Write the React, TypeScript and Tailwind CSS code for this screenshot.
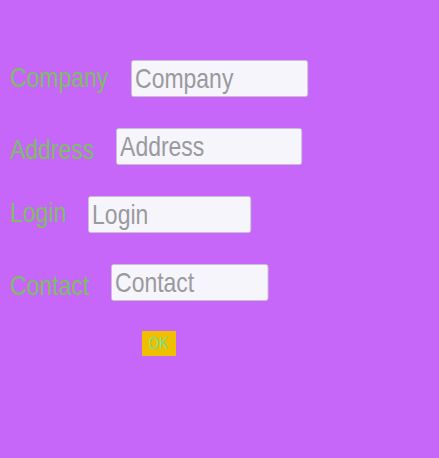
import React from 'react';

// Arial Narrow look: Liberation Sans squeezed horizontally
const fields = [
  { label: 'Company', labelW: 'w-[99px]', outer: 'w-[177px]', inner: 'w-[216px]', offset: 'mt-[2px]' },
  { label: 'Address', labelW: 'w-[84px]', outer: 'w-[186px]', inner: 'w-[227px]', offset: 'mt-[6px]' },
  { label: 'Login', labelW: 'w-[56px]', outer: 'w-[163px]', inner: 'w-[199px]', offset: 'mt-[1px]' },
  { label: 'Contact', labelW: 'w-[79px]', outer: 'w-[157px]', inner: 'w-[192px]', offset: 'mt-[6px]' },
];

export default function App() {
  return (
    <div className="min-h-[458px] w-full bg-[#c767fa] pt-[60px] pl-[10px] font-['Liberation_Sans',Arial,sans-serif]">
      <div className="flex flex-col gap-[31px]">
        {fields.map((f) => (
          <div key={f.label} className="flex h-[37px] items-start gap-[22px]">
            <label className={`${f.labelW} ${f.offset} whitespace-nowrap text-[28px] leading-[32px] text-[#7cbf63]`}>
              <span className="inline-block origin-left scale-x-[0.82]">{f.label}</span>
            </label>
            <div className={`${f.outer} h-[37px]`}>
              <input
                placeholder={f.label}
                className={`${f.inner} h-[37px] origin-left scale-x-[0.82] rounded-[3px] border border-[#c4c0cc] bg-[#f5f5fb] px-[4px] text-[28px] text-gray-700 outline-none placeholder:text-[#9a9a9e]`}
              />
            </div>
          </div>
        ))}
      </div>
      <button className="ml-[132px] mt-[30px] flex h-[25px] w-[34px] items-center justify-center bg-[#f0c000] text-[16px] leading-none text-[#74e08c]">
        <span className="inline-block scale-x-[0.85]">OK</span>
      </button>
    </div>
  );
}
